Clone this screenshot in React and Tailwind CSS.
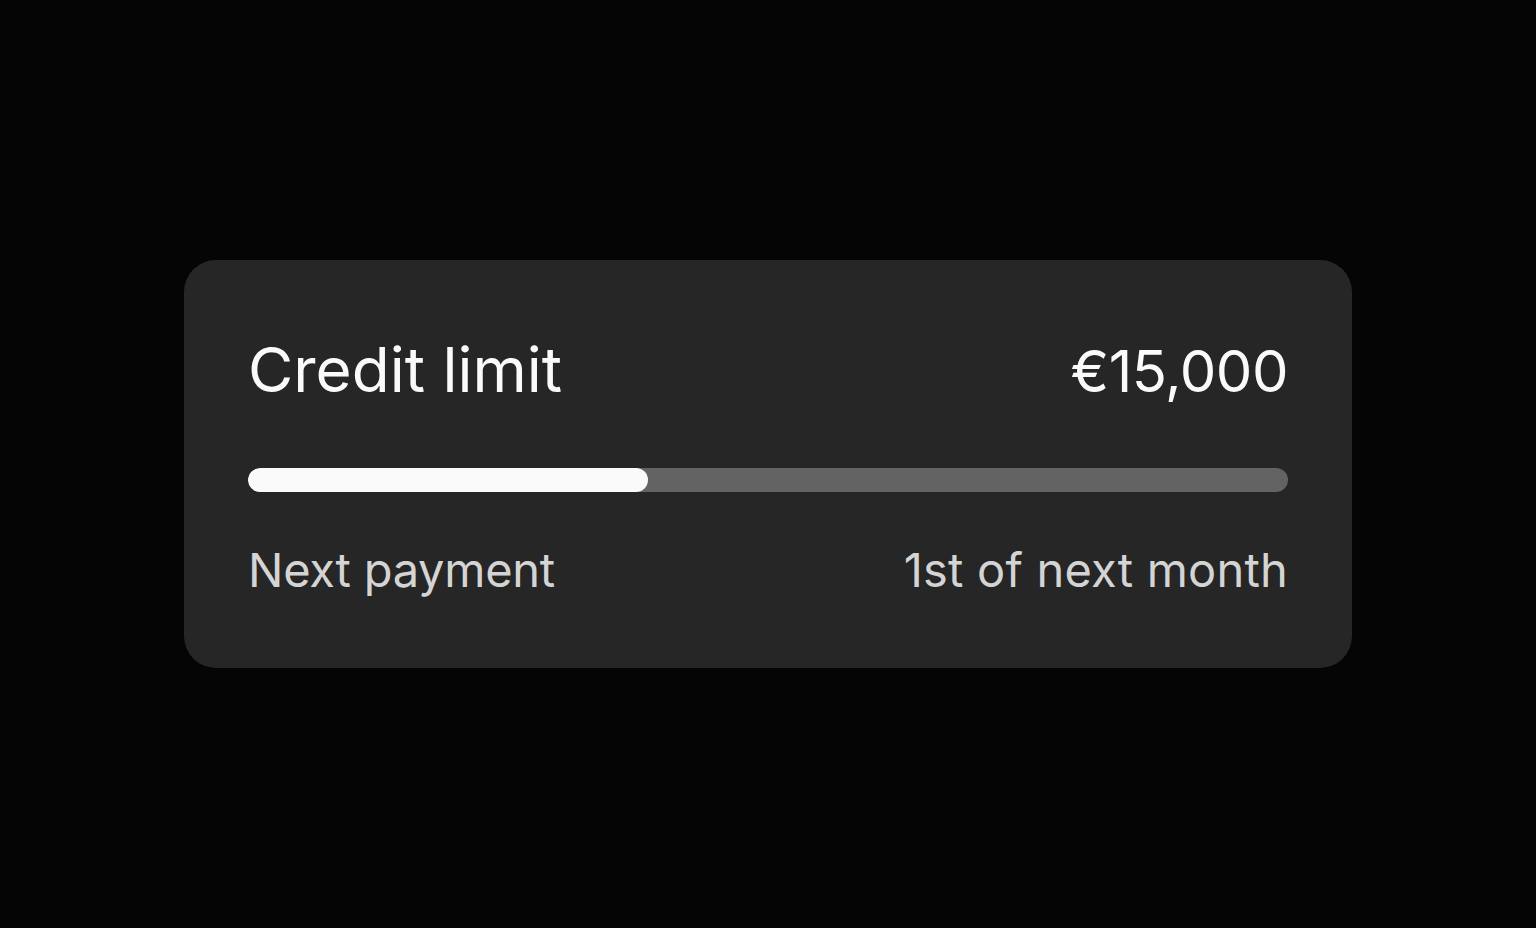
export default function App() {
  return (
    <div className="min-h-screen w-full bg-[#050505] flex items-center justify-center" style={{ fontFamily: 'Inter, "Liberation Sans", sans-serif' }}>
      <div className="w-[1168px] h-[408px] rounded-[32px] bg-[#262626] px-16 pt-[72px] flex flex-col">
        <div className="flex items-baseline justify-between">
          <span className="text-[62px] leading-[76px] text-[#fafafa]">Credit limit</span>
          <span className="text-[58px] leading-[76px] text-[#fafafa] tracking-[-0.5px]">€15,000</span>
        </div>
        <div className="mt-[59px] h-6 w-full rounded-full bg-[#636363] overflow-hidden">
          <div className="h-full w-[400px] rounded-full bg-[#fafafa]" />
        </div>
        <div className="mt-[49px] flex items-baseline justify-between text-[47px] leading-[58px] text-[#d4d4d4]">
          <span className="tracking-[-0.25px]">Next payment</span>
          <span className="tracking-[0.2px]">1st of next month</span>
        </div>
      </div>
    </div>
  );
}
